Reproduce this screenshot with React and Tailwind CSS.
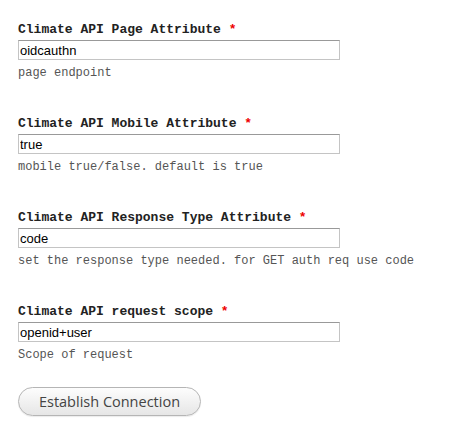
import React from 'react';

const fields = [
  { label: 'Climate API Page Attribute', value: 'oidcauthn', help: 'page endpoint' },
  { label: 'Climate API Mobile Attribute', value: 'true', help: 'mobile true/false. default is true' },
  { label: 'Climate API Response Type Attribute', value: 'code', help: 'set the response type needed. for GET auth req use code' },
  { label: 'Climate API request scope', value: 'openid+user', help: 'Scope of request' },
];

const Field = ({ label, value, help }) => (
  <div className="flex flex-col">
    <label className="block h-4 text-[13px] leading-4 font-bold text-[#222] font-['Liberation_Mono','Courier_New',monospace]">
      {label} <span className="text-[#ee0000]">*</span>
    </label>
    <input
      defaultValue={value}
      className="mt-[2px] h-5 w-[322px] border border-[#c4c4c4] border-t-[#999] bg-white px-[1px] text-[13px] text-black outline-none font-['Liberation_Sans',Arial,sans-serif]"
    />
    <div className="mt-[5px] h-4 text-[12px] leading-4 text-[#555] font-['Liberation_Mono','Courier_New',monospace]">
      {help}
    </div>
  </div>
);

export default function App() {
  return (
    <div className="min-h-screen bg-white pl-[18px] pt-[22px]">
      <div className="flex flex-col gap-[35px]">
        {fields.map((f) => (
          <Field key={f.label} {...f} />
        ))}
      </div>
      <button className="mt-6 h-[29px] w-[183px] rounded-full border border-[#b5b5b5] bg-gradient-to-b from-[#fdfdfd] to-[#e6e6e6] text-[14.5px] text-[#444] shadow-[0_1px_1px_rgba(0,0,0,0.08)] font-['Open_Sans','DejaVu_Sans',sans-serif]">
        Establish Connection
      </button>
    </div>
  );
}
